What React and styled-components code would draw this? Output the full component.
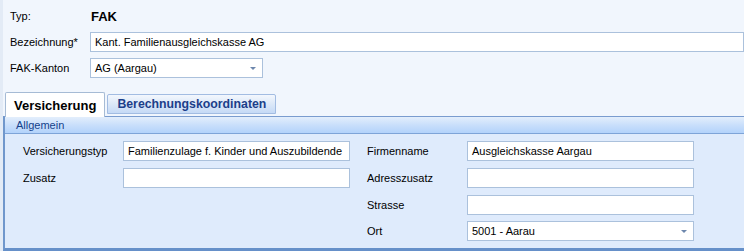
import React from "react";
import styled, { createGlobalStyle } from "styled-components";

const GlobalStyle = createGlobalStyle`
  html, body {
    margin: 0;
    padding: 0;
    background: #f1f6fd;
  }
  * {
    box-sizing: border-box;
  }
`;

const Page = styled.div`
  width: 744px;
  height: 251px;
  overflow: hidden;
  background: #f1f6fd;
  border-left: 3px solid #e3ebf6;
  font-family: "Liberation Sans", Arial, sans-serif;
  font-size: 11px;
  color: #000;
  display: flex;
  flex-direction: column;
`;

const TopForm = styled.div`
  display: grid;
  grid-template-columns: 80px 1fr;
  grid-auto-rows: min-content;
  padding: 7px 0 0 7px;
`;

const Label = styled.div`
  display: flex;
  align-items: center;
  height: ${({ $h }) => $h || 20}px;
  margin-bottom: ${({ $mb }) => $mb ?? 6}px;
  white-space: nowrap;
`;

const Value = styled.div`
  display: flex;
  align-items: center;
  height: ${({ $h }) => $h || 20}px;
  margin-bottom: ${({ $mb }) => $mb ?? 6}px;
  font-weight: bold;
  font-size: 13px;
  padding-left: 1px;
`;

const Field = styled.div`
  position: relative;
  height: 20px;
  width: ${({ $w }) => ($w ? `${$w}px` : "auto")};
  margin-bottom: ${({ $mb }) => $mb ?? 6}px;
  background: #fff;
  border: 1px solid #abc1dc;
  display: flex;
  align-items: center;
  padding-left: 4px;
  white-space: nowrap;
  overflow: hidden;
`;

const Arrow = styled.span`
  position: absolute;
  right: 6px;
  top: 8px;
  width: 0;
  height: 0;
  border-left: 3px solid transparent;
  border-right: 3px solid transparent;
  border-top: 3px solid #6d87ad;
`;

const TabStrip = styled.div`
  display: flex;
  align-items: flex-end;
  gap: 2px;
  margin-top: 14px;
  padding-left: 2px;
  height: 24px;
  position: relative;
  z-index: 1;
`;

const Tab = styled.div`
  height: ${({ $active }) => ($active ? 25 : 20)}px;
  padding: 0 ${({ $active }) => ($active ? 8 : 9)}px;
  margin-bottom: ${({ $active }) => ($active ? -1 : 2)}px;
  display: flex;
  align-items: center;
  font-weight: bold;
  font-size: ${({ $active }) => ($active ? 13 : 12.3)}px;
  border: 1px solid ${({ $active }) => ($active ? "#a6bbd5" : "#a2bce2")};
  border-bottom: ${({ $active }) => ($active ? "none" : "1px solid #a2bce2")};
  border-radius: 2px 2px 0 0;
  color: ${({ $active }) => ($active ? "#000" : "#1c3f8a")};
  background: ${({ $active }) =>
    $active
      ? "#ffffff"
      : "linear-gradient(to bottom, #f3f7fd 0%, #dce8f8 50%, #c5daf6 100%)"};
`;

const Panel = styled.div`
  flex: 1;
  display: flex;
  flex-direction: column;
  border-left: 2px solid #7097cc;
  border-top: 1px solid #7a9ccf;
  border-bottom: 3px solid #6690c9;
  background: #dfebfc;
`;

const PanelHeader = styled.div`
  height: 17px;
  padding-left: 11px;
  display: flex;
  align-items: center;
  color: #15428b;
  font-size: 11px;
  background: linear-gradient(to bottom, #e3eefc 0%, #c9dffb 50%, #b3d3fb 100%);
  border-bottom: 1px solid #7ea4d8;
`;

const PanelBody = styled.div`
  display: grid;
  grid-template-columns: 100px 227px 117px 227px;
  align-content: start;
  padding: 7px 0 0 18px;
`;

const Spacer = styled.div``;

const RightLabel = styled(Label)`
  padding-left: 17px;
`;

export default function App() {
  return (
    <>
      <GlobalStyle />
      <Page>
        <TopForm>
          <Label $h={18} $mb={7}>Typ:</Label>
          <Value $h={18} $mb={7}>FAK</Value>
          <Label>Bezeichnung*</Label>
          <Field>Kant. Familienausgleichskasse AG</Field>
          <Label $mb={0}>FAK-Kanton</Label>
          <Field $w={173} $mb={0}>
            AG (Aargau)
            <Arrow />
          </Field>
        </TopForm>

        <TabStrip>
          <Tab $active>Versicherung</Tab>
          <Tab>Berechnungskoordinaten</Tab>
        </TabStrip>

        <Panel>
          <PanelHeader>Allgemein</PanelHeader>
          <PanelBody>
            <Label $mb={7}>Versicherungstyp</Label>
            <Field $mb={7}>Familienzulage f. Kinder und Auszubildende</Field>
            <RightLabel $mb={7}>Firmenname</RightLabel>
            <Field $mb={7}>Ausgleichskasse Aargau</Field>

            <Label $mb={7}>Zusatz</Label>
            <Field $mb={7} />
            <RightLabel $mb={7}>Adresszusatz</RightLabel>
            <Field $mb={7} />

            <Spacer />
            <Spacer />
            <RightLabel $mb={6}>Strasse</RightLabel>
            <Field $mb={6} />

            <Spacer />
            <Spacer />
            <RightLabel $mb={6}>Ort</RightLabel>
            <Field $mb={6}>
              5001 - Aarau
              <Arrow />
            </Field>
          </PanelBody>
        </Panel>
      </Page>
    </>
  );
}
